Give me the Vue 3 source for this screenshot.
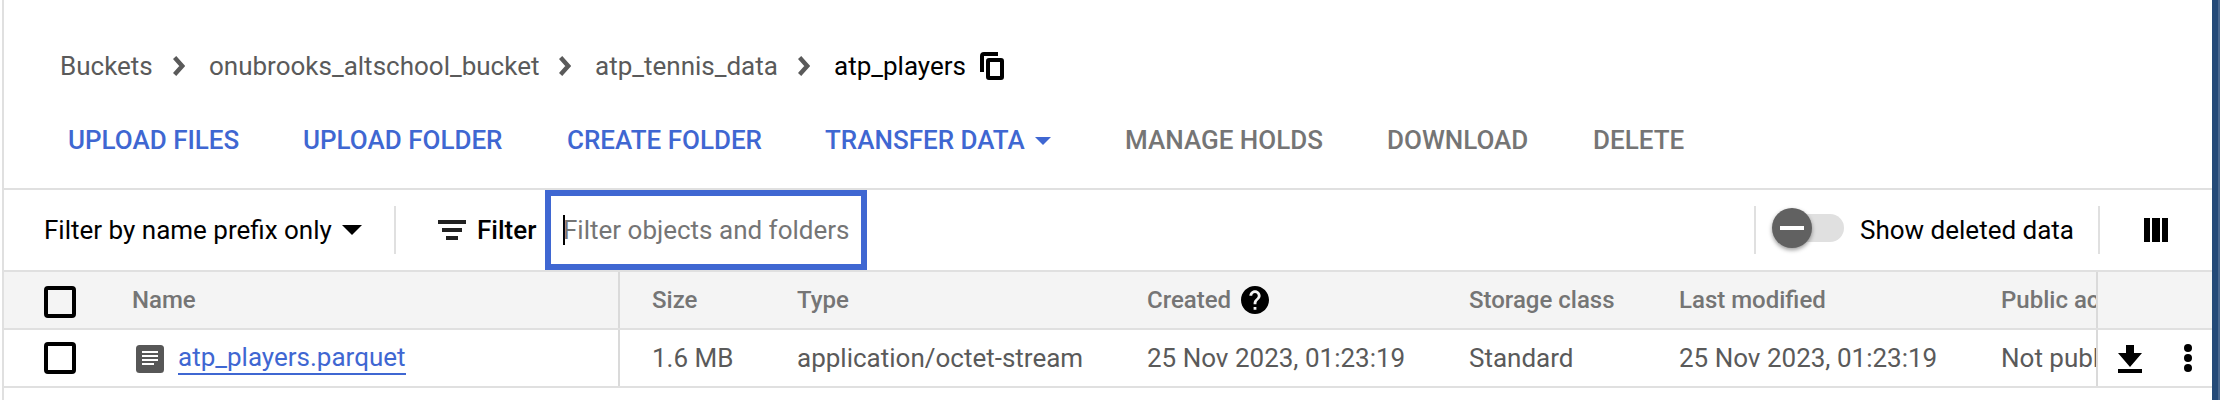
<script setup>
const parents = [
  { name: 'Buckets', cls: 'c-root' },
  { name: 'onubrooks_altschool_bucket', cls: 'c-bucket' },
  { name: 'atp_tennis_data', cls: 'c-folder' },
]
const actions = [
  { label: 'UPLOAD FILES', cls: 'a-files' },
  { label: 'UPLOAD FOLDER', cls: 'a-folder' },
  { label: 'CREATE FOLDER', cls: 'a-create' },
  { label: 'TRANSFER DATA', cls: 'a-transfer', menu: true },
  { label: 'MANAGE HOLDS', cls: 'a-holds', off: true },
  { label: 'DOWNLOAD', cls: 'a-download', off: true },
  { label: 'DELETE', cls: 'a-delete', off: true },
]
</script>

<template>
  <div class="page">
    <main class="panel">
      <nav class="crumbs">
        <template v-for="p in parents" :key="p.name">
          <a class="crumb" :class="p.cls">{{ p.name }}</a>
          <svg class="chevron" width="12" height="20" viewBox="0 0 12 20"><path d="M1.6 1.6 L9.2 10 L1.6 18.4" fill="none" stroke="#5a5a5a" stroke-width="4.4" /></svg>
        </template>
        <span class="current">atp_players</span>
        <svg class="copy" width="24" height="28" viewBox="0 0 24 28">
          <path d="M2 20V4Q2 2 4 2H18" fill="none" stroke="#000" stroke-width="4" />
          <rect x="8" y="8" width="14" height="18" rx="1" fill="none" stroke="#000" stroke-width="4" />
        </svg>
      </nav>

      <div class="actions">
        <button v-for="a in actions" :key="a.label" class="action" :class="[a.cls, { off: a.off }]">
          <span>{{ a.label }}</span>
          <svg v-if="a.menu" class="caret" width="16" height="8" viewBox="0 0 16 8"><path d="M0 0H16L8 8Z" fill="#3f67d2" /></svg>
        </button>
      </div>

      <div class="toolbar">
        <div class="prefix">
          <span class="t-prefix">Filter by name prefix only</span>
          <svg width="20" height="10" viewBox="0 0 20 10"><path d="M0 0H20L10 10Z" /></svg>
        </div>
        <i class="rule"></i>
        <div class="filter">
          <svg width="28" height="20" viewBox="0 0 28 20"><path d="M0 0H28V4H0ZM4 8H24V12H4ZM8 16H20V20H8Z" fill="#212121" /></svg>
          <b>Filter</b>
        </div>
        <div class="field"><i class="cursor"></i><span class="t-hint">Filter objects and folders</span></div>
        <div class="right">
          <i class="rule"></i>
          <div class="switch"><span class="knob"></span></div>
          <span class="t-show">Show deleted data</span>
          <i class="rule"></i>
          <svg width="24" height="24" viewBox="0 0 24 24"><path d="M0 0H6V24H0ZM8 0H16V24H8ZM18 0H24V24H18Z" /></svg>
        </div>
      </div>

      <div class="row head">
        <div class="cell name"><span class="box"></span><span class="t-name">Name</span></div>
        <div class="cell size">Size</div>
        <div class="cell">Type</div>
        <div class="cell">
          <span>Created</span>
          <svg class="help" width="28" height="28" viewBox="2 2 20 20"><path d="M12 2C6.48 2 2 6.48 2 12s4.48 10 10 10 10-4.48 10-10S17.52 2 12 2zm1 17h-2v-2h2v2zm2.07-7.75l-.9.92C13.45 12.9 13 13.5 13 15h-2v-.5c0-1.1.45-2.1 1.17-2.83l1.24-1.26c.37-.36.59-.86.59-1.41 0-1.1-.9-2-2-2s-2 .9-2 2H8c0-2.21 1.79-4 4-4s4 1.79 4 4c0 .88-.36 1.68-.93 2.25z" /></svg>
        </div>
        <div class="cell">Storage class</div>
        <div class="cell">Last modified</div>
        <div class="cell clip">Public access</div>
        <div class="cell tools"></div>
      </div>

      <div class="row body">
        <div class="cell name">
          <span class="box"></span>
          <svg class="doc" width="28" height="28" viewBox="0 0 28 28">
            <rect width="28" height="28" rx="3.5" fill="#575757" />
            <path d="M6 7H22M6 11H22M6 15H22M6 19H18" stroke="#fff" stroke-width="2" />
          </svg>
          <a class="link">atp_players.parquet</a>
        </div>
        <div class="cell size">1.6 MB</div>
        <div class="cell">application/octet-stream</div>
        <div class="cell">25 Nov 2023, 01:23:19</div>
        <div class="cell">Standard</div>
        <div class="cell">25 Nov 2023, 01:23:19</div>
        <div class="cell clip">Not public</div>
        <div class="cell tools">
          <svg width="24" height="28" viewBox="0 0 24 28"><path d="M8 0H16V8H24L12 22L0 8H8ZM0 24H24V28H0Z" /></svg>
          <svg class="dots" width="8" height="28" viewBox="0 0 8 28"><circle cx="4" cy="4" r="4" /><circle cx="4" cy="14" r="4" /><circle cx="4" cy="24" r="4" /></svg>
        </div>
      </div>
    </main>
    <aside class="edge"></aside>
  </div>
</template>

<style>
body { margin: 0; background: #fff; }
</style>

<style scoped>
.page { display: flex; width: 2220px; height: 400px; overflow: hidden; font-family: Roboto, sans-serif; font-size: 26px; line-height: 32px; color: #000; white-space: nowrap; }
.page * { box-sizing: border-box; }
svg { display: block; flex: none; }
.panel { width: 2210px; margin-left: 2px; border-left: 2px solid #e0e0e0; background: #fff; }
.edge { width: 8px; background: #244a78; border-right: 2px solid #4a688f; }

.crumbs { display: flex; align-items: center; height: 32px; margin-top: 50px; padding-left: 56px; color: #5a5a5a; }
.crumb { flex: none; }
.c-root { width: 113px; }
.c-bucket { width: 350px; }
.c-folder { width: 203px; }
.chevron { margin-right: 24px; }
.current { width: 146px; color: #000; }

.actions { display: flex; align-items: flex-start; height: 108px; padding: 42px 0 0 64px; border-bottom: 2px solid #e0e0e0; }
.action { display: flex; flex: none; align-items: center; margin: 0; padding: 0; border: 0; background: none; font: 500 26px/32px Roboto, sans-serif; color: #3f67d2; text-align: left; }
.action.off { color: #757575; }
.a-files { width: 235px; }
.a-folder { width: 264px; }
.a-create { width: 258px; }
.a-transfer { width: 300px; }
.a-holds { width: 262px; }
.a-download { width: 206px; }
.caret { margin: 2px 0 0 10px; }

.toolbar { display: flex; align-items: center; height: 82px; padding-left: 40px; border-bottom: 2px solid #e0e0e0; }
.prefix { display: flex; align-items: center; width: 350px; }
.t-prefix { width: 298px; }
.rule { flex: none; width: 2px; height: 48px; background: #e0e0e0; }
.filter { display: flex; align-items: center; width: 149px; padding-left: 42px; }
.filter b { margin-left: 11px; font-weight: 500; }
.field { display: flex; align-items: center; width: 322px; height: 80px; padding-left: 12px; border: 6px solid #3f67d2; color: #757575; }
.cursor { width: 2px; height: 30px; margin-right: -2px; background: #000; }
.right { display: flex; align-items: center; margin-left: auto; padding-right: 44px; }
.switch { width: 68px; height: 28px; margin: -4px 0 0 20px; border-radius: 14px; background: #e0e0e0; }
.knob { display: flex; align-items: center; justify-content: center; width: 40px; height: 40px; margin: -6px 0 0 -4px; border-radius: 50%; background: #616161; box-shadow: 0 2px 4px rgba(0, 0, 0, 0.4); }
.knob::after { content: ''; width: 24px; height: 4px; background: #fff; }
.t-show { width: 238px; margin-left: 16px; }
.right svg { margin-left: 44px; }

.row { display: grid; grid-template-columns: 616px 177px 350px 322px 210px 322px 95px 116px; height: 58px; border-bottom: 2px solid #e0e0e0; color: #5a5a5a; }
.head { background: #f4f4f4; font-size: 24px; font-weight: 500; color: #757575; }
.cell { display: flex; align-items: center; min-width: 0; }
.name { padding-left: 40px; border-right: 2px solid #dadada; }
.size { padding-left: 32px; }
.clip { overflow: hidden; }
.tools { padding-left: 20px; border-left: 2px solid #dadada; }
.box { flex: none; width: 32px; height: 32px; border: 4px solid #000; border-radius: 4px; }
.head .box { margin-top: 4px; }
.t-name { margin-left: 56px; }
.doc { margin: 2px 14px 0 60px; }
.link { height: 34px; border-bottom: 2px solid #3f67d2; color: #3f67d2; }
.help { margin-left: 10px; fill: #000; }
.tools svg { margin-top: 2px; fill: #000; }
.tools .dots { margin: 0 0 0 42px; }
</style>
